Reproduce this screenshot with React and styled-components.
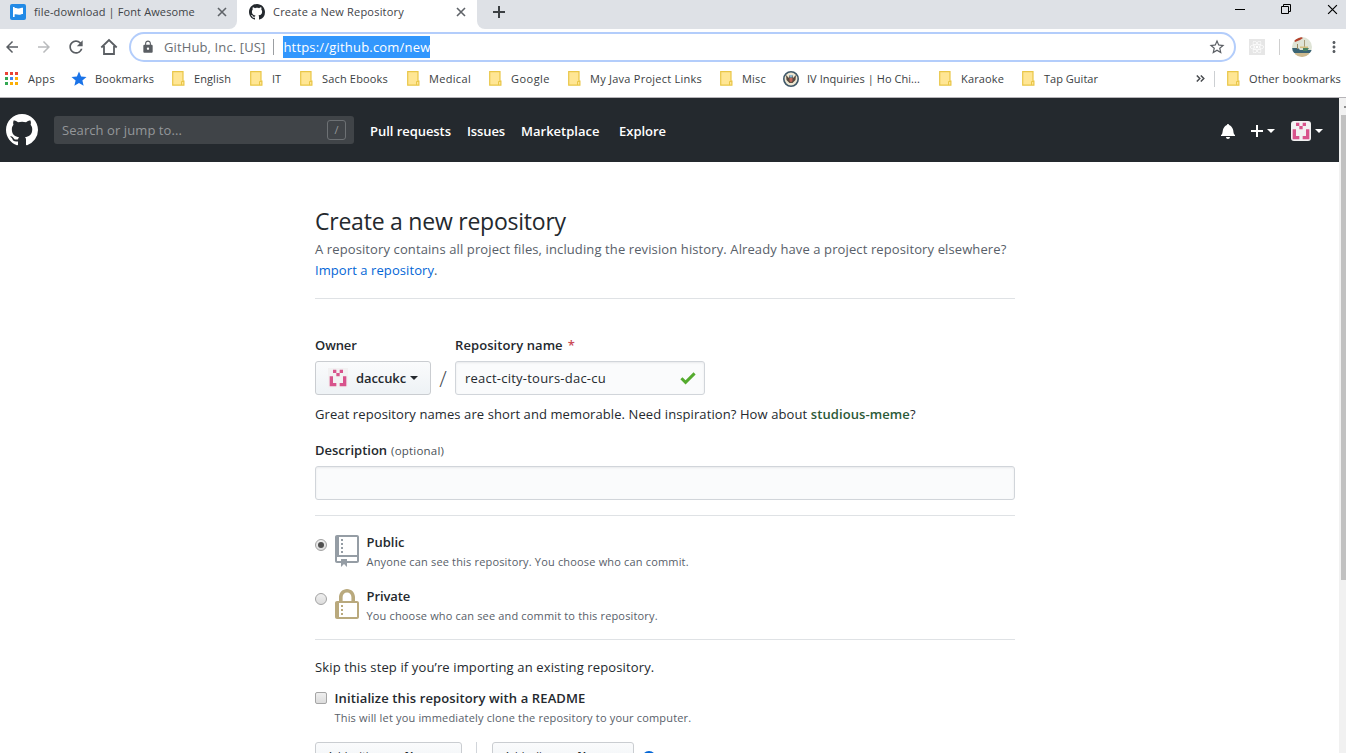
import React from "react";
import styled, { createGlobalStyle, css } from "styled-components";
import { MdArrowBack, MdArrowForward, MdRefresh, MdLock, MdStarBorder, MdStar, MdMoreVert } from "react-icons/md";
import { FaReact } from "react-icons/fa";

const GlobalStyle = createGlobalStyle`
  * { box-sizing: border-box; }
  body {
    margin: 0;
    overflow: hidden;
    background: #fff;
    color: #24292e;
    font-family: "Open Sans", "Noto Sans", sans-serif;
    font-size: 13px;
  }
  svg { display: block; flex: none; }
`;

const Screen = styled.div`
  width: 1346px;
  height: 753px;
  overflow: hidden;
  display: flex;
  flex-direction: column;
  white-space: nowrap;
`;

/* ---------- browser chrome ---------- */

const TabStrip = styled.div`
  display: flex;
  height: 29px;
  flex: none;
`;

const InactiveTab = styled.div`
  display: flex;
  align-items: center;
  width: 237px;
  padding: 0 10px 5px 10px;
  background: #dee1e6;
  border-bottom-right-radius: 8px;
`;

const ActiveTab = styled.div`
  display: flex;
  align-items: center;
  width: 240px;
  padding: 0 11px 5px 12px;
`;

const TabTitle = styled.span`
  flex: 1;
  margin-left: 8px;
  font-size: 11px;
  line-height: 16px;
  color: #3f4347;
  letter-spacing: ${(p) => p.$ls}px;
`;

const StripRest = styled.div`
  display: flex;
  flex: 1;
  padding: 0 8px 0 16px;
  background: #dee1e6;
  border-bottom-left-radius: 8px;
`;

const NewTab = styled.div`
  flex: 1;
  padding-top: 6px;
`;

const WindowButtons = styled.div`
  display: flex;
  gap: 36px;
  padding-top: 4px;
`;

const Toolbar = styled.div`
  display: flex;
  align-items: center;
  height: 36px;
  flex: none;
  padding: 0 3px;
  color: #5a5e63;
`;

const NavButtons = styled.div`
  display: flex;
  align-items: center;
  gap: 13.5px;
  width: 126px;
`;

const Omnibox = styled.div`
  display: flex;
  align-items: center;
  width: 1107px;
  height: 30px;
  padding: 0 8px 0 10px;
  border: 2px solid #b3cdfb;
  border-radius: 15px;
`;

const SiteOwner = styled.span`
  margin-left: 9px;
  line-height: 20px;
  letter-spacing: 0.12px;
  color: #6a6e73;
`;

const OmniDivider = styled.span`
  width: 1px;
  height: 16px;
  margin: 0 9px 0 8px;
  background: #9b9ea2;
`;

const SelectedUrl = styled.span`
  height: 22px;
  line-height: 22px;
  background: #3297fd;
  color: #fff;
  letter-spacing: 0.19px;
`;

const Spacer = styled.span`
  flex: 1;
`;

const Extension = styled.span`
  display: flex;
  align-items: center;
  justify-content: center;
  width: 16px;
  height: 16px;
  margin-left: 13px;
  background: #e6e6e6;
  color: #fff;
`;

const ToolbarDivider = styled.span`
  width: 1px;
  height: 16px;
  margin: 0 12px 0 14px;
  background: #cfcfcf;
`;

const BookmarksBar = styled.div`
  display: flex;
  align-items: center;
  height: 33px;
  flex: none;
  padding: 0 0 5px 5px;
  border-bottom: 1px solid #b6b4b8;
`;

const Bookmark = styled.div`
  display: flex;
  align-items: center;
  width: ${(p) => p.$w}px;
  flex: none;
`;

const BookmarkIcon = styled.span`
  width: ${(p) => p.$w}px;
  flex: none;
`;

const StarIcon = styled(MdStar)`
  margin-left: -2px;
  color: #1a73e8;
`;

const BookmarkLabel = styled.span`
  font-size: 11px;
  line-height: 16px;
  color: #3a3e42;
  letter-spacing: ${(p) => p.$ls}px;
`;

const BarDivider = styled.span`
  width: 1px;
  height: 16px;
  margin-right: 12px;
  background: #cccfd2;
`;

/* ---------- page ---------- */

const Viewport = styled.div`
  display: flex;
  flex: 1;
  min-height: 0;
`;

const Page = styled.div`
  width: 1339px;
  overflow: hidden;
`;

const Header = styled.header`
  display: flex;
  align-items: center;
  height: 64px;
  padding: 0 16px 0 6px;
  background: #24292e;
  color: #fff;
`;

const SearchBox = styled.div`
  display: flex;
  align-items: center;
  justify-content: space-between;
  width: 300px;
  height: 28px;
  margin: 0 16px;
  padding: 0 8px;
  border-radius: 3px;
  background: #404448;
  color: #94979a;
  letter-spacing: 0.08px;
`;

const SlashKey = styled.span`
  width: 19px;
  height: 20px;
  border: 1px solid #6d7174;
  border-radius: 3px;
  font-size: 11px;
  line-height: 18px;
  text-align: center;
`;

const NavLink = styled.a`
  width: ${(p) => p.$w}px;
  padding-top: 2px;
  font-weight: 600;
  letter-spacing: ${(p) => p.$ls}px;
`;

const HeaderTools = styled.div`
  display: flex;
  align-items: center;
  padding-top: 2px;
`;

const HeaderTool = styled.span`
  display: flex;
  align-items: center;
  margin-right: ${(p) => p.$gap || 0}px;
`;

const Caret = styled.span`
  width: 0;
  height: 0;
  margin-left: 4px;
  border: 4px solid transparent;
  border-top-color: currentColor;
  border-bottom: 0;
`;

const Avatar = styled.span`
  width: 20px;
  height: 20px;
  border-radius: ${(p) => p.$radius || 0}px;
  overflow: hidden;
  background: #f2f1f2;
`;

const Main = styled.main`
  width: 700px;
  margin-left: 315px;
  padding-top: 42px;
`;

const Title = styled.h1`
  margin: 0;
  font-size: 23px;
  font-weight: 400;
  line-height: 35px;
  letter-spacing: -0.23px;
`;

const Subtitle = styled.p`
  margin: 0;
  line-height: 21px;
  letter-spacing: 0.11px;
  color: #586069;
`;

const Link = styled.a`
  color: #0366d6;
  letter-spacing: 0.08px;
`;

const Rule = styled.div`
  height: 1px;
  margin-top: ${(p) => p.$top}px;
  background: #dfe2e5;
`;

const NameRow = styled.div`
  display: flex;
  margin-top: 36px;
`;

const Field = styled.div`
  width: ${(p) => p.$w}px;
`;

const Label = styled.div`
  height: 26px;
  font-weight: 600;
  line-height: 21px;
  letter-spacing: ${(p) => p.$ls}px;
`;

const Required = styled.span`
  margin-left: 5px;
  color: #cb4b57;
`;

const Optional = styled.span`
  margin-left: 4px;
  font-size: 11.5px;
  font-weight: 400;
  letter-spacing: 0.2px;
  color: #4a5158;
`;

const boxed = css`
  border: 1px solid #d1d5da;
  border-radius: 3px;
`;

const OwnerButton = styled.div`
  ${boxed}
  display: flex;
  align-items: center;
  width: 116px;
  height: 34px;
  padding-left: 12px;
  border-color: #cacdd1;
  background: linear-gradient(#fafbfc, #eff3f6 90%);
  font-weight: 600;
  letter-spacing: -0.1px;
`;

const OwnerName = styled.span`
  margin-left: 8px;
`;

const Slash = styled.span`
  display: flex;
  justify-content: center;
  width: 24px;
  padding-top: 27px;
  font-size: 22px;
  font-weight: 300;
  line-height: 32px;
  color: #454b52;
`;

const TextInput = styled.div`
  ${boxed}
  display: flex;
  align-items: center;
  justify-content: space-between;
  height: 34px;
  padding: 0 8px 0 9px;
  background: #fafbfc;
  box-shadow: inset 0 1px 2px rgba(27, 31, 35, 0.075);
  letter-spacing: 0.23px;
`;

const Paragraph = styled.p`
  margin: ${(p) => p.$top}px 0 0;
  line-height: 21px;
  letter-spacing: ${(p) => p.$ls}px;
`;

const Suggestion = styled.strong`
  font-weight: 600;
  color: #2c5a37;
`;

const DescriptionField = styled.div`
  margin-top: 15px;
`;

const Choice = styled.div`
  display: flex;
  height: 40px;
  margin-top: ${(p) => p.$top}px;
`;

const Radio = styled.span`
  display: flex;
  align-items: center;
  justify-content: center;
  width: 12px;
  height: 12px;
  margin: 7px 8px 0 0;
  border: 1px solid #a2a2a2;
  border-radius: 50%;
  background: linear-gradient(#efefef, #dcdcdc);
`;

const RadioDot = styled.span`
  width: 6px;
  height: 6px;
  border-radius: 50%;
  background: #505050;
`;

const Checkbox = styled.span`
  width: 12px;
  height: 12px;
  margin: 4px 7.5px 0 0;
  border: 1px solid #a5a5a5;
  border-radius: 2px;
  background: linear-gradient(#efefef, #dcdcdc);
`;

const ChoiceIcon = styled.span`
  width: 31.5px;
  padding-top: 3px;
`;

const ChoiceName = styled.div`
  font-weight: 600;
  line-height: 20px;
  letter-spacing: ${(p) => p.$ls}px;
`;

const Note = styled.div`
  font-size: 11px;
  line-height: 20px;
  letter-spacing: ${(p) => p.$ls}px;
  color: #586069;
`;

const TemplateRow = styled.div`
  display: flex;
  margin-top: 14px;
`;

const TemplateButton = styled.div`
  ${boxed}
  width: ${(p) => p.$w}px;
  height: 28px;
  padding: 3px 11px;
  border-color: #cacdd1;
  background: linear-gradient(#fafbfc, #eff3f6 90%);
  font-size: 11px;
  line-height: 20px;
`;

const RowDivider = styled.span`
  width: 1px;
  height: 28px;
  margin: 0 15px 0 14px;
  background: #d1d5da;
`;

const InfoIcon = styled.span`
  width: 14px;
  height: 14px;
  margin: 9px 0 0 8px;
  border: 2px solid #0366d6;
  border-radius: 50%;
`;

const ScrollTrack = styled.div`
  width: 7px;
  padding: 8px 0 0 2px;
  background: #f1f1f1;
`;

const ScrollArrow = styled.div`
  width: 2px;
  height: 2px;
  margin-left: 3px;
  background: #8d8d8d;
`;

const ScrollThumb = styled.div`
  height: 465px;
  margin-top: 7px;
  background: #c1c1c1;
`;

/* ---------- drawings ---------- */

const GithubMark = ({ size }) => (
  <svg width={size} height={size} viewBox="0 0 16 16" fill="currentColor">
    <path fillRule="evenodd" d="M8 0C3.58 0 0 3.58 0 8c0 3.54 2.29 6.53 5.47 7.59.4.07.55-.17.55-.38 0-.19-.01-.82-.01-1.49-2.01.37-2.53-.49-2.69-.94-.09-.23-.48-.94-.82-1.13-.28-.15-.68-.52-.01-.53.63-.01 1.08.58 1.23.82.72 1.21 1.87.87 2.33.66.07-.52.28-.87.51-1.07-1.78-.2-3.64-.89-3.64-3.95 0-.87.31-1.59.82-2.15-.08-.2-.36-1.02.08-2.12 0 0 .67-.21 2.2.82.64-.18 1.32-.27 2-.27.68 0 1.36.09 2 .27 1.53-1.04 2.2-.82 2.2-.82.44 1.1.16 1.92.08 2.12.51.56.82 1.27.82 2.15 0 3.07-1.87 3.75-3.65 3.95.29.25.54.73.54 1.48 0 1.07-.01 1.93-.01 2.2 0 .21.15.46.55.38A8.013 8.013 0 0 0 16 8c0-4.42-3.58-8-8-8z" />
  </svg>
);

const FlagLogo = () => (
  <svg width="16" height="16" viewBox="0 0 16 16">
    <rect width="16" height="16" rx="2" fill="#228ae6" />
    <path d="M3 3h1.6v10H3z" fill="#fff" />
    <path d="M4 4.2c2-.9 3.2.5 5 .3 1.2-.1 2.5-.7 4-.7v6.2c-1.5 0-2.7.8-4 .8-1.8 0-3-.9-5-.2z" fill="#fff" />
  </svg>
);

const CloseMark = ({ size = 10, width = 1.6, color = "#5f6368" }) => (
  <svg width={size} height={size} viewBox="0 0 10 10" stroke={color} strokeWidth={width}>
    <path d="M1 1l8 8M9 1l-8 8" />
  </svg>
);

const HomeIcon = () => (
  <svg width="18" height="18" viewBox="0 0 18 18" fill="none" stroke="currentColor" strokeWidth="1.8">
    <path d="M1.3 9.5L9 2l7.7 7.5M4 8v8h10V8" />
  </svg>
);

const FolderIcon = () => (
  <svg width="13" height="15" viewBox="0 0 13 15">
    <path d="M.7.7h10.3v9.3h.9v4.2H.7z" fill="#ffe694" stroke="#e9c648" strokeWidth="1.2" />
    <path d="M9.5 14v-3.5h2.5" fill="none" stroke="#e9c648" />
  </svg>
);

const appColors = ["#ea4335", "#ea4335", "#ea4335", "#34a853", "#4285f4", "#fbae05", "#34a853", "#fbae05", "#fbae05"];

const AppsIcon = () => (
  <svg width="13" height="13" viewBox="0 0 13 13">
    {appColors.map((c, i) => (
      <rect key={i} x={(i % 3) * 5} y={Math.floor(i / 3) * 5} width="3" height="3" fill={c} />
    ))}
  </svg>
);

const SealIcon = () => (
  <svg width="16" height="16" viewBox="0 0 16 16">
    <circle cx="8" cy="8" r="7.2" fill="#eee7d2" stroke="#40596a" strokeWidth="1.6" />
    <path d="M3 4l3 3V4.5h4V7l3-3-.5 5L9.5 12h-3L3.5 9z" fill="#5a4b3f" />
    <path d="M6.5 7h3v3L8 11.5 6.5 10z" fill="#c0665c" />
    <path d="M6.5 4h3v2.5h-3z" fill="#8ab6cf" />
  </svg>
);

const ProfilePhoto = () => (
  <svg width="20" height="20" viewBox="0 0 20 20">
    <clipPath id="photo"><circle cx="10" cy="10" r="10" /></clipPath>
    <g clipPath="url(#photo)">
      <path d="M0 0h20v20H0z" fill="#dfe4d6" />
      <path d="M2 3l7-3 2 1-3 2-5 2z" fill="#b5402c" />
      <path d="M0 11h6l2 2h12v3H0z" fill="#3a6474" />
      <path d="M12 3h.8v9H12zM5 7h1v5H5z" fill="#9a8b62" />
      <path d="M8 9.5h8V11H8z" fill="#d3bd7c" />
      <path d="M11 11h6l-2 3h-4z" fill="#4c8562" />
      <path d="M3 16h14v4H3z" fill="#cdb98e" />
    </g>
  </svg>
);

const Identicon = () => (
  <svg width="20" height="20" viewBox="0 0 60 60" fill="#d8538c">
    <path d="M15 5h10v10h10V5h10v10H35v10H25V15H15zM5 25h10v20h10v10H5zM45 25h10v30H35V45h10z" />
  </svg>
);

const BellIcon = () => (
  <svg width="14" height="16" viewBox="0 0 14 16" fill="currentColor">
    <path d="M14 12v1H0v-1l.73-.58c.77-.77.81-2.55 1.19-4.42C2.69 3.23 6 2 6 2c0-.55.45-1 1-1s1 .45 1 1c0 0 3.39 1.23 4.16 5 .38 1.88.42 3.66 1.19 4.42l.66.58H14zm-7 4c1.11 0 2-.89 2-2H5c0 1.11.89 2 2 2z" />
  </svg>
);

const PlusIcon = () => (
  <svg width="12" height="16" viewBox="0 0 12 16" fill="currentColor">
    <path d="M12 9H7v5H5V9H0V7h5V2h2v5h5z" />
  </svg>
);

const CheckIcon = () => (
  <svg width="16" height="14" viewBox="-.5 2.5 13 11" fill="#54ab2e">
    <path d="M12.2 5.1L4 13.3-.2 9.1 1.5 7.4 4 9.9l6.5-6.5z" />
  </svg>
);

const RepoIcon = () => (
  <svg width="24" height="32" viewBox="0 0 12 16" fill="#959da5">
    <path fillRule="evenodd" d="M4 9H3V8h1v1zm0-3H3v1h1V6zm0-2H3v1h1V4zm0-2H3v1h1V2zm8-1v12c0 .55-.45 1-1 1H6v2l-1.5-1.5L3 16v-2H1c-.55 0-1-.45-1-1V1c0-.55.45-1 1-1h10c.55 0 1 .45 1 1zm-1 10H1v2h2v-1h3v1h5v-2zm0-10H2v9h9V1z" />
  </svg>
);

const LockIcon = () => (
  <svg width="24" height="32" viewBox="0 0 12 16" fill="#b9a97d">
    <path fillRule="evenodd" d="M4 13H3v-1h1v1zm8-6v7c0 .55-.45 1-1 1H1c-.55 0-1-.45-1-1V7c0-.55.45-1 1-1h1V4c0-2.2 1.8-4 4-4s4 1.8 4 4v2h1c.55 0 1 .45 1 1zM3.8 6h4.41V4c0-1.22-.98-2.2-2.2-2.2-1.22 0-2.2.98-2.2 2.2v2H3.8zM11 7H2v7h9V7zM4 8H3v1h1V8zm0 2H3v1h1v-1z" />
  </svg>
);

const bookmarks = [
  { icon: <AppsIcon />, iw: 23, w: 67, ls: 0.33, label: "Apps" },
  { icon: <StarIcon size={18} />, iw: 23, w: 100, ls: 0.12, label: "Bookmarks" },
  { icon: <FolderIcon />, iw: 22, w: 78, ls: 0.09, label: "English" },
  { icon: <FolderIcon />, iw: 22, w: 50, ls: 0, label: "IT" },
  { icon: <FolderIcon />, iw: 22, w: 107, ls: 0.17, label: "Sach Ebooks" },
  { icon: <FolderIcon />, iw: 22, w: 82, ls: 0.32, label: "Medical" },
  { icon: <FolderIcon />, iw: 22, w: 79, ls: 0.47, label: "Google" },
  { icon: <FolderIcon />, iw: 22, w: 152, ls: 0.25, label: "My Java Project Links" },
  { icon: <FolderIcon />, iw: 22, w: 63, ls: 0.2, label: "Misc" },
  { icon: <SealIcon />, iw: 24, w: 156, ls: 0.05, label: "IV Inquiries | Ho Chi..." },
  { icon: <FolderIcon />, iw: 22, w: 83, ls: 0.14, label: "Karaoke" },
  { icon: <FolderIcon />, iw: 22, w: 174, ls: 0.02, label: "Tap Guitar" },
];

export default function App() {
  return (
    <Screen>
      <GlobalStyle />
      <TabStrip>
        <InactiveTab>
          <FlagLogo />
          <TabTitle $ls={0.13}>file-download | Font Awesome</TabTitle>
          <CloseMark />
        </InactiveTab>
        <ActiveTab>
          <GithubMark size={16} />
          <TabTitle $ls={0.2}>Create a New Repository</TabTitle>
          <CloseMark />
        </ActiveTab>
        <StripRest>
          <NewTab>
            <svg width="12" height="12" viewBox="0 0 12 12" fill="#3c4043">
              <path d="M5 0h2v5h5v2H7v5H5V7H0V5h5z" />
            </svg>
          </NewTab>
          <WindowButtons>
            <svg width="11" height="10" viewBox="0 0 11 10"><path d="M1 5h10v1H1z" /></svg>
            <svg width="10" height="10" viewBox="0 0 10 10" fill="none" stroke="#000">
              <path d="M.5 2.5h7v7h-7zM2.5 2.5v-2h7v7h-2" />
            </svg>
            <CloseMark size={11} width={1.1} color="#000" />
          </WindowButtons>
        </StripRest>
      </TabStrip>
      <Toolbar>
        <NavButtons>
          <MdArrowBack size={18} />
          <MdArrowForward size={18} color="#b9bbbd" />
          <MdRefresh size={20} />
          <HomeIcon />
        </NavButtons>
        <Omnibox>
          <MdLock size={14} />
          <SiteOwner>GitHub, Inc. [US]</SiteOwner>
          <OmniDivider />
          <SelectedUrl>https://github.com/new</SelectedUrl>
          <Spacer />
          <MdStarBorder size={18} />
        </Omnibox>
        <Extension><FaReact size={14} /></Extension>
        <ToolbarDivider />
        <ProfilePhoto />
        <Spacer />
        <MdMoreVert size={18} />
      </Toolbar>
      <BookmarksBar>
        {bookmarks.map((b) => (
          <Bookmark key={b.label} $w={b.w}>
            <BookmarkIcon $w={b.iw}>{b.icon}</BookmarkIcon>
            <BookmarkLabel $ls={b.ls}>{b.label}</BookmarkLabel>
          </Bookmark>
        ))}
        <Bookmark $w={18}>
          <svg width="9" height="7" viewBox="0 0 9 7" fill="none" stroke="#4a4d51" strokeWidth="1.5">
            <path d="M.8.5l3 3-3 3M4.8.5l3 3-3 3" />
          </svg>
        </Bookmark>
        <BarDivider />
        <Bookmark $w={119}>
          <BookmarkIcon $w={22}><FolderIcon /></BookmarkIcon>
          <BookmarkLabel $ls={0.11}>Other bookmarks</BookmarkLabel>
        </Bookmark>
      </BookmarksBar>

      <Viewport>
        <Page>
          <Header>
            <GithubMark size={32} />
            <SearchBox>
              Search or jump to...
              <SlashKey>/</SlashKey>
            </SearchBox>
            <NavLink $w={97} $ls={-0.05}>Pull requests</NavLink>
            <NavLink $w={54} $ls={-0.12}>Issues</NavLink>
            <NavLink $w={98} $ls={0}>Marketplace</NavLink>
            <NavLink $w={48} $ls={-0.02}>Explore</NavLink>
            <Spacer />
            <HeaderTools>
              <HeaderTool $gap={16}><BellIcon /></HeaderTool>
              <HeaderTool $gap={16}><PlusIcon /><Caret /></HeaderTool>
              <HeaderTool><Avatar $radius={3}><Identicon /></Avatar><Caret /></HeaderTool>
            </HeaderTools>
          </Header>
          <Main>
            <Title>Create a new repository</Title>
            <Subtitle>
              A repository contains all project files, including the revision history. Already have a project repository elsewhere?
              <br />
              <Link>Import a repository</Link>.
            </Subtitle>
            <Rule $top={17} />
            <NameRow>
              <Field $w={116}>
                <Label $ls={-0.1}>Owner</Label>
                <OwnerButton>
                  <Avatar><Identicon /></Avatar>
                  <OwnerName>daccukc</OwnerName>
                  <Caret />
                </OwnerButton>
              </Field>
              <Slash>/</Slash>
              <Field $w={250}>
                <Label $ls={0.08}>Repository name<Required>*</Required></Label>
                <TextInput>react-city-tours-dac-cu<CheckIcon /></TextInput>
              </Field>
            </NameRow>
            <Paragraph $top={9} $ls={0.095}>
              Great repository names are short and memorable. Need inspiration? How about <Suggestion>studious-meme</Suggestion>?
            </Paragraph>
            <DescriptionField>
              <Label $ls={0}>Description<Optional>(optional)</Optional></Label>
              <TextInput />
            </DescriptionField>
            <Rule $top={15} />
            <Choice $top={16}>
              <Radio><RadioDot /></Radio>
              <ChoiceIcon><RepoIcon /></ChoiceIcon>
              <div>
                <ChoiceName $ls={0}>Public</ChoiceName>
                <Note $ls={0.17}>Anyone can see this repository. You choose who can commit.</Note>
              </div>
            </Choice>
            <Choice $top={14}>
              <Radio />
              <ChoiceIcon><LockIcon /></ChoiceIcon>
              <div>
                <ChoiceName $ls={-0.1}>Private</ChoiceName>
                <Note $ls={0.16}>You choose who can see and commit to this repository.</Note>
              </div>
            </Choice>
            <Rule $top={13} />
            <Paragraph $top={17} $ls={0.13}>Skip this step if you’re importing an existing repository.</Paragraph>
            <Choice $top={10}>
              <Checkbox />
              <div>
                <ChoiceName $ls={0.12}>Initialize this repository with a README</ChoiceName>
                <Note $ls={0.17}>This will let you immediately clone the repository to your computer.</Note>
              </div>
            </Choice>
            <TemplateRow>
              <TemplateButton $w={147}>Add .gitignore: <b>None</b></TemplateButton>
              <RowDivider />
              <TemplateButton $w={142}>Add a license: <b>None</b></TemplateButton>
              <InfoIcon />
            </TemplateRow>
          </Main>
        </Page>
        <ScrollTrack>
          <ScrollArrow />
          <ScrollThumb />
        </ScrollTrack>
      </Viewport>
    </Screen>
  );
}
